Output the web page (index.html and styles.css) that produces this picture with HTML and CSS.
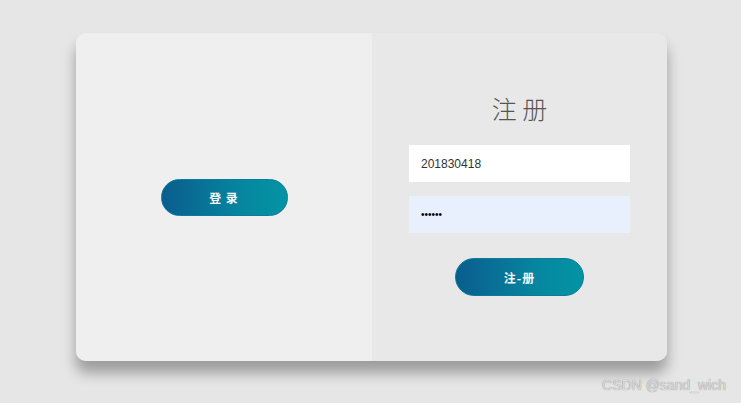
FILE: index.html
```html
<!DOCTYPE html>
<html lang="zh">
<head>
<meta charset="utf-8">
<link rel="stylesheet" href="styles.css">
</head>
<body>
<div class="card">
  <div class="panel panel-left">
    <button class="btn">登 录</button>
  </div>
  <div class="panel panel-right">
    <h2 class="title">注 册</h2>
    <input class="field" type="text" value="201830418">
    <input class="field field-filled" type="password" value="123456">
    <button class="btn btn-reg">注-册</button>
  </div>
</div>
<div class="watermark">CSDN @sand_wich</div>
</body>
</html>
```
FILE: styles.css
```css
html, body {
  margin: 0;
  padding: 0;
}
body {
  background: #e6e6e6;
  width: 741px;
  height: 403px;
  overflow: hidden;
  position: relative;
  font-family: "Liberation Sans", Arial, "Noto Sans CJK SC", sans-serif;
}
.card {
  width: 591px;
  height: 328px;
  margin: 33px 0 0 76px;
  display: flex;
  border-radius: 10px;
  overflow: hidden;
  box-shadow: 0 12px 14px rgba(0, 0, 0, 0.32);
}
.panel {
  height: 100%;
  display: flex;
  flex-direction: column;
  align-items: center;
}
.panel-left {
  width: 296px;
  background: #efefef;
  justify-content: center;
}
.panel-right {
  width: 295px;
  background: #e8e8e8;
  padding-top: 60px;
  box-sizing: border-box;
}
.title {
  margin: 0 0 22px;
  font-size: 25px;
  line-height: 30px;
  font-weight: 300;
  color: #555;
  letter-spacing: 0;
  font-family: "Noto Sans CJK SC", sans-serif;
}
.field {
  display: block;
  width: 221px;
  height: 37px;
  box-sizing: border-box;
  border: none;
  outline: none;
  background: #fff;
  padding: 0 12px;
  font-size: 12px;
  color: #333;
  font-family: "Liberation Sans", Arial, sans-serif;
  margin: 0 0 14px;
}
.field-filled {
  background: #e8f0fe;
  margin-bottom: 25px;
  font-size: 10px;
  color: #000;
}
.btn {
  width: 127px;
  height: 37px;
  border-radius: 19px;
  border: 1px solid #0b7b9b;
  background: linear-gradient(90deg, #0a5d8d 0%, #0687a0 65%, #0394a4 100%);
  color: #f4f8fa;
  font-size: 12px;
  font-weight: bold;
  letter-spacing: 1px;
  font-family: "Noto Sans CJK SC", sans-serif;
  padding: 0;
  cursor: pointer;
}
.btn-reg {
  width: 129px;
  height: 38px;
}
.watermark {
  position: absolute;
  right: 15px;
  bottom: 10px;
  font-size: 14px;
  color: #dcdcdc;
  text-shadow: 0 0 1px #777;
  font-family: "Liberation Sans", Arial, sans-serif;
}
```
